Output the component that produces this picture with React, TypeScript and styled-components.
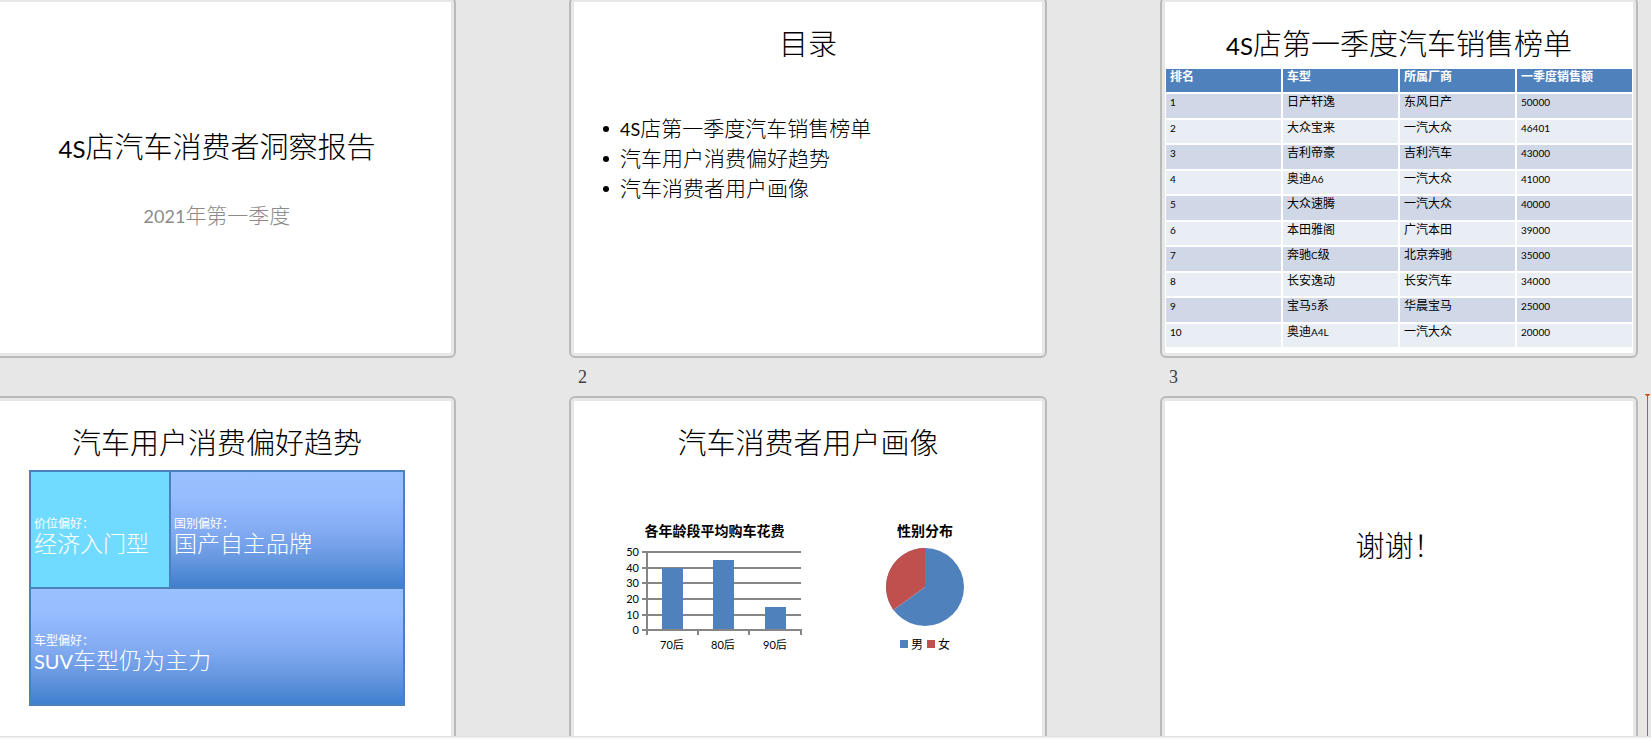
import React from "react";
import styled, { createGlobalStyle, css } from "styled-components";

const GlobalStyle = createGlobalStyle`
  *, *::before, *::after { box-sizing: border-box; }
  body {
    margin: 0;
    background: #e7e7e7;
    color: #000;
    font-family: "Noto Sans CJK SC", sans-serif;
    font-weight: 300;
  }
  h2, h3, p, figure, ul { margin: 0; padding: 0; }
`;

type Size = "title" | "body" | "tile" | "small";

const CJK_SIZE: Record<Size, number> = { title: 29, body: 21, tile: 23, small: 12 };
const LATIN_SIZE: Record<Size, number> = { title: 24, body: 18, tile: 20, small: 10 };

const Screen = styled.div`
  display: flex;
  flex-direction: column;
  height: 100vh;
  overflow: hidden;
`;

const Sorter = styled.main`
  flex: 1;
  min-height: 0;
  overflow: hidden;
`;

const Deck = styled.div`
  display: grid;
  grid-template-columns: repeat(3, minmax(0, 1fr));
  column-gap: 113px;
  margin: -3px 13px 0 -22px;
`;

const StatusStrip = styled.footer`
  height: 3px;
  border-top: 1px solid #e0e0e0;
  background: #f5f5f5;
`;

const SlideCell = styled.section`
  position: relative;
`;

const Frame = styled.div`
  display: flex;
  aspect-ratio: 478 / 361;
  padding: 3px;
  border: 2px solid #bababa;
  border-radius: 6px;
`;

const Paper = styled.div`
  flex: 1;
  min-width: 0;
  overflow: hidden;
  background: #fff;
`;

const SlideNumber = styled.p`
  height: 38px;
  padding-left: 9px;
  font: 18px/38px "Liberation Serif", serif;
  color: #404040;
`;

const InsertMarker = styled.svg`
  position: absolute;
  top: -2px;
  right: -12px;
  width: 5px;
  height: 100%;
  overflow: hidden;
`;

const Latin = styled.span<{ $size: Size }>`
  font-family: Lato, sans-serif;
  font-size: ${(p) => LATIN_SIZE[p.$size]}px;
  font-weight: ${(p) => (p.$size === "small" ? "inherit" : 400)};
  line-height: 1;
`;

const textSize = (size: Size) => css`
  font-size: ${CJK_SIZE[size]}px;
`;

const Title = styled.h2<{ $cover?: boolean }>`
  ${textSize("title")}
  padding-top: ${(p) => (p.$cover ? 123 : 20)}px;
  line-height: 40px;
  font-weight: 300;
  text-align: center;
  white-space: nowrap;
`;

const Subtitle = styled.p`
  ${textSize("body")}
  padding-top: 34px;
  line-height: 30px;
  text-align: center;
  color: #8b8b8b;
`;

const Agenda = styled.ul`
  ${textSize("body")}
  padding: 50px 0 0 29px;
  line-height: 30px;
  list-style: none;
`;

const AgendaItem = styled.li`
  display: flex;
  align-items: center;
  gap: 11px;

  &::before {
    content: "";
    width: 6px;
    height: 6px;
    margin-top: 4px;
    border-radius: 50%;
    background: #000;
  }
`;

const Ranking = styled.table`
  ${textSize("small")}
  width: 100%;
  margin-top: 6px;
  border-spacing: 0;
  table-layout: fixed;
  line-height: 14px;
`;

const HeadCell = styled.th`
  height: 25px;
  padding: 0 4px;
  border: 1px solid #fff;
  background: #4f81bd;
  color: #fff;
  font-weight: 700;
  text-align: left;
  vertical-align: top;
`;

const Row = styled.tr`
  height: 25px;
  background: #e9edf4;

  &:nth-child(odd) {
    height: 26px;
    background: #d0d8e8;
  }
`;

const Cell = styled.td`
  padding: 0 4px;
  border: 1px solid #fff;
  font-weight: 400;
  vertical-align: top;
`;

const TileMap = styled.div`
  display: grid;
  grid-template-columns: 138fr 232fr;
  gap: 2px;
  margin: 9px 46px 0;
  padding: 2px;
  background: #4a80bc;
`;

const Tile = styled.div<{ $accent?: boolean; $wide?: boolean }>`
  grid-column: ${(p) => (p.$wide ? "1 / -1" : "auto")};
  height: 115px;
  padding: 43px 3px 0;
  background: ${(p) =>
    p.$accent
      ? "#71dbff"
      : "linear-gradient(#9bc0ff, #98bdff 20%, #84acf3 50%, #6798e0 75%, #3f7fcd)"};
  color: #fff;
`;

const TileLabel = styled.p`
  ${textSize("small")}
  line-height: 16px;
  font-weight: 400;
`;

const TileValue = styled.p`
  ${textSize("tile")}
  line-height: 22px;
`;

const Charts = styled.div`
  display: flex;
  gap: 80px;
  padding: 60px 0 0 50px;
`;

const Chart = styled.figure`
  display: flex;
  flex-direction: column;
  align-items: center;
`;

const ChartTitle = styled.figcaption`
  font-size: 14px;
  line-height: 18px;
  font-weight: 700;
  margin-bottom: 6px;
`;

const Plot = styled.svg`
  display: block;
`;

const AxisText = styled.text`
  font-family: Lato, "Noto Sans CJK SC", sans-serif;
  font-size: 11px;
  font-weight: 400;
`;

const Legend = styled.div`
  ${textSize("small")}
  display: flex;
  gap: 4px;
  margin-top: 8px;
  line-height: 18px;
  font-weight: 400;
`;

const LegendItem = styled.span<{ $color: string }>`
  display: flex;
  align-items: center;
  gap: 3px;

  &::before {
    content: "";
    width: 8px;
    height: 8px;
    background: ${(p) => p.$color};
  }
`;

/* Sets runs of Latin letters and digits in their own face beside the Chinese text. */
function Mixed({ size, children }: { size: Size; children: string }) {
  return (
    <>
      {children.split(/([A-Za-z0-9]+)/).map((part, i) =>
        i % 2 ? (
          <Latin key={i} $size={size}>
            {part}
          </Latin>
        ) : (
          part
        )
      )}
    </>
  );
}

function Slide({
  number,
  marker,
  children,
}: {
  number?: number;
  marker?: boolean;
  children: React.ReactNode;
}) {
  return (
    <SlideCell>
      <Frame>
        <Paper>{children}</Paper>
      </Frame>
      <SlideNumber>{number}</SlideNumber>
      {marker && (
        <InsertMarker aria-hidden="true">
          <path d="M0 0h5v1h-1v1h-1v398h-1V2H1V1H0z" fill="#d2571b" />
        </InsertMarker>
      )}
    </SlideCell>
  );
}

const AGENDA = ["4S店第一季度汽车销售榜单", "汽车用户消费偏好趋势", "汽车消费者用户画像"];

const HEADINGS = ["排名", "车型", "所属厂商", "一季度销售额"];

const SALES = [
  ["1", "日产轩逸", "东风日产", "50000"],
  ["2", "大众宝来", "一汽大众", "46401"],
  ["3", "吉利帝豪", "吉利汽车", "43000"],
  ["4", "奥迪A6", "一汽大众", "41000"],
  ["5", "大众速腾", "一汽大众", "40000"],
  ["6", "本田雅阁", "广汽本田", "39000"],
  ["7", "奔驰C级", "北京奔驰", "35000"],
  ["8", "长安逸动", "长安汽车", "34000"],
  ["9", "宝马5系", "华晨宝马", "25000"],
  ["10", "奥迪A4L", "一汽大众", "20000"],
];

const GRID_LINES = [
  { value: 50, y: 6 },
  { value: 40, y: 22 },
  { value: 30, y: 37 },
  { value: 20, y: 53 },
  { value: 10, y: 69 },
  { value: 0, y: 84 },
];

const BARS = [
  { label: "70后", x: 38, top: 23 },
  { label: "80后", x: 89, top: 15 },
  { label: "90后", x: 141, top: 62 },
];

function BarPlot() {
  return (
    <Plot width="181" height="108" viewBox="0 0 181 108">
      {GRID_LINES.map(({ value, y }) => (
        <React.Fragment key={value}>
          <rect x="18" y={y} width="159" height="2" fill="#868686" />
          <AxisText x="15" y={y + 5} textAnchor="end">
            {value}
          </AxisText>
        </React.Fragment>
      ))}
      <rect x="22" y="6" width="2" height="80" fill="#868686" />
      {[22, 73, 124, 176].map((x) => (
        <rect key={x} x={x} y="84" width="2" height="6" fill="#868686" />
      ))}
      {BARS.map(({ label, x, top }) => (
        <React.Fragment key={label}>
          <rect x={x} y={top} width="21" height={84 - top} fill="#4f81bd" />
          <AxisText x={x + 10} y="104" textAnchor="middle">
            {label}
          </AxisText>
        </React.Fragment>
      ))}
    </Plot>
  );
}

function PiePlot() {
  return (
    <Plot width="80" height="82" viewBox="-40 -42 80 82">
      <circle r="39" fill="#4f81bd" />
      <path d="M0 0L-31.5 22.9A39 39 0 0 1 0 -39z" fill="#c0504d" />
      <path d="M0 0L-31.5 22.9" stroke="#c99aa8" strokeWidth="0.6" />
    </Plot>
  );
}

export default function App() {
  return (
    <Screen>
      <GlobalStyle />
      <Sorter>
        <Deck>
          <Slide>
            <Title $cover>
              <Mixed size="title">4S店汽车消费者洞察报告</Mixed>
            </Title>
            <Subtitle>
              <Mixed size="body">2021年第一季度</Mixed>
            </Subtitle>
          </Slide>

          <Slide number={2}>
            <Title>目录</Title>
            <Agenda>
              {AGENDA.map((item) => (
                <AgendaItem key={item}>
                  <span>
                    <Mixed size="body">{item}</Mixed>
                  </span>
                </AgendaItem>
              ))}
            </Agenda>
          </Slide>

          <Slide number={3}>
            <Title>
              <Mixed size="title">4S店第一季度汽车销售榜单</Mixed>
            </Title>
            <Ranking>
              <thead>
                <tr>
                  {HEADINGS.map((heading) => (
                    <HeadCell key={heading} scope="col">
                      {heading}
                    </HeadCell>
                  ))}
                </tr>
              </thead>
              <tbody>
                {SALES.map((row) => (
                  <Row key={row[0]}>
                    {row.map((value, i) => (
                      <Cell key={i}>
                        <Mixed size="small">{value}</Mixed>
                      </Cell>
                    ))}
                  </Row>
                ))}
              </tbody>
            </Ranking>
          </Slide>

          <Slide>
            <Title>汽车用户消费偏好趋势</Title>
            <TileMap>
              <Tile $accent>
                <TileLabel>价位偏好：</TileLabel>
                <TileValue>经济入门型</TileValue>
              </Tile>
              <Tile>
                <TileLabel>国别偏好：</TileLabel>
                <TileValue>国产自主品牌</TileValue>
              </Tile>
              <Tile $wide>
                <TileLabel>车型偏好：</TileLabel>
                <TileValue>
                  <Mixed size="tile">SUV车型仍为主力</Mixed>
                </TileValue>
              </Tile>
            </TileMap>
          </Slide>

          <Slide>
            <Title>汽车消费者用户画像</Title>
            <Charts>
              <Chart>
                <ChartTitle>各年龄段平均购车花费</ChartTitle>
                <BarPlot />
              </Chart>
              <Chart>
                <ChartTitle>性别分布</ChartTitle>
                <PiePlot />
                <Legend>
                  <LegendItem $color="#4f81bd">男</LegendItem>
                  <LegendItem $color="#c0504d">女</LegendItem>
                </Legend>
              </Chart>
            </Charts>
          </Slide>

          <Slide marker>
            <Title $cover>谢谢！</Title>
          </Slide>
        </Deck>
      </Sorter>
      <StatusStrip />
    </Screen>
  );
}
